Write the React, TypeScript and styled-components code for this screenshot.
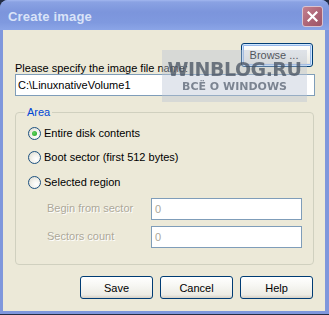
import React from 'react';
import styled, { createGlobalStyle } from 'styled-components';

const Global = createGlobalStyle`
  html, body { margin: 0; padding: 0; background: #232d45; }
  body {
    width: 329px; height: 315px; overflow: hidden;
    font-family: "Liberation Sans", Arial, sans-serif;
    font-size: 11px; color: #000;
  }
`;

const Window = styled.div`
  position: relative;
  width: 329px;
  height: 314px;
  box-sizing: border-box;
  display: flex;
  flex-direction: column;
  border-radius: 8px 8px 0 0;
  overflow: hidden;
  background: #7f97dc;
`;

const TitleBar = styled.div`
  height: 30px;
  flex: none;
  display: flex;
  align-items: center;
  justify-content: space-between;
  padding: 0 6px 0 8px;
  box-sizing: border-box;
  background: linear-gradient(#a2b7ef 0px, #8aa2e3 2px, #7c95dc 40%, #7f99df 75%, #8ba5e7 100%);
`;

const Title = styled.span`
  font-family: "Liberation Sans", Arial, sans-serif;
  font-weight: bold;
  font-size: 13px;
  color: #d9e3f8;
  letter-spacing: 0.2px;
  margin-top: 2px;
`;

const CloseButton = styled.div`
  width: 21px;
  height: 21px;
  box-sizing: border-box;
  border: 1px solid #d9c3d0;
  border-radius: 3px;
  background: linear-gradient(135deg, #c4808f, #aa6274 60%, #9d5567);
  display: flex;
  align-items: center;
  justify-content: center;
  margin-top: 2px;
`;

const Frame = styled.div`
  flex: 1;
  display: flex;
  padding: 0 4px 3px 3px;
`;

const Content = styled.div`
  position: relative;
  flex: 1;
  background: #ece9d8;
  display: flex;
  flex-direction: column;
  padding: 13px 10px 12px 12px;
`;

const TopRow = styled.div`
  display: flex;
  align-items: flex-end;
  justify-content: space-between;
`;

const Label = styled.span<{ $disabled?: boolean }>`
  line-height: 13px;
  color: ${p => (p.$disabled ? '#aca899' : '#000')};
  ${p => (p.$disabled ? 'text-shadow: 1px 1px 0 #fff;' : '')}
`;

const FileLabel = styled(Label)`
  margin-bottom: -4px;
`;

const Button = styled.button<{ $default?: boolean }>`
  font-family: "Liberation Sans", Arial, sans-serif;
  font-size: 11px;
  color: #000;
  width: 73px;
  height: 23px;
  box-sizing: border-box;
  border: 1px solid #003c74;
  border-radius: 3px;
  background: linear-gradient(#ffffff 0%, #f7f7f3 40%, #ecebe4 85%, #d6d0c5 100%);
  box-shadow: ${p => (p.$default ? 'inset 0 0 0 1px #cee7ff, inset 0 0 0 2px #98b8ea' : 'none')};
  padding: 0;
`;

const BrowseButton = styled(Button)`
  width: 72px;
  height: 24px;
  margin: 0 2px 4px 0;
  padding-right: 6px;
`;

const TextInput = styled.div<{ $disabled?: boolean }>`
  height: 22px;
  box-sizing: border-box;
  border: 1px solid #7f9db9;
  background: #fff;
  display: flex;
  align-items: center;
  padding-left: ${p => (p.$disabled ? '3px' : '2px')};
  color: ${p => (p.$disabled ? '#aca899' : '#000')};
`;

const PathInput = styled(TextInput)`
  margin-top: 3px;
`;

const GroupBox = styled.fieldset`
  margin: 10px 1px 0 0;
  padding: 2px 10px 16px 12px;
  border: 1px solid #d0d0bf;
  border-radius: 4px;
  display: flex;
  flex-direction: column;
`;

const Legend = styled.legend`
  color: #0046d5;
  padding: 0 2px;
  margin-left: -3px;
  line-height: 13px;
`;

const RadioRow = styled.div`
  height: 24.5px;
  display: flex;
  align-items: center;
  gap: 3px;
`;

const RadioCircle = styled.span<{ $checked?: boolean }>`
  width: 13px;
  height: 13px;
  box-sizing: border-box;
  border-radius: 50%;
  border: 1px solid #1c5180;
  background: radial-gradient(circle at 65% 65%, #ffffff 0%, #f4f3ee 40%, #d8d7cc 100%);
  display: flex;
  align-items: center;
  justify-content: center;
  &::after {
    content: '';
    display: ${p => (p.$checked ? 'block' : 'none')};
    width: 5px;
    height: 5px;
    border-radius: 50%;
    background: radial-gradient(circle at 40% 40%, #5fd35f, #21a121);
  }
`;

const FieldGrid = styled.div`
  display: grid;
  grid-template-columns: 104px 151px;
  row-gap: 6px;
  align-items: center;
  padding-left: 19px;
  margin-top: 3px;
`;

const ButtonRow = styled.div`
  margin-top: auto;
  display: flex;
  justify-content: flex-end;
  gap: 7px;
  padding-right: 2px;
`;

const Watermark = styled.div`
  position: absolute;
  left: 159px;
  top: 20px;
  width: 145px;
  height: 52px;
  background: rgba(185, 195, 212, 0.42);
  display: flex;
  flex-direction: column;
  align-items: center;
  justify-content: center;
  gap: 1px;
  pointer-events: none;
`;

const WmTitle = styled.span`
  font-family: "DejaVu Sans", Verdana, sans-serif;
  font-weight: bold;
  font-size: 19px;
  line-height: 20px;
  color: rgba(70, 80, 95, 0.75);
  filter: blur(0.6px);
  letter-spacing: -0.5px;
`;

const WmSub = styled.span`
  font-family: "DejaVu Sans", Verdana, sans-serif;
  font-weight: bold;
  font-size: 11px;
  line-height: 13px;
  color: rgba(80, 90, 105, 0.7);
  filter: blur(0.5px);
`;

export default function App() {
  return (
    <>
      <Global />
      <Window>
        <TitleBar>
          <Title>Create image</Title>
          <CloseButton>
            <svg width="11" height="11" viewBox="0 0 11 11">
              <path d="M1.5 1.5 L9.5 9.5 M9.5 1.5 L1.5 9.5" stroke="#fff" strokeWidth="2.2" strokeLinecap="square" />
            </svg>
          </CloseButton>
        </TitleBar>
        <Frame>
          <Content>
            <TopRow>
              <FileLabel>Please specify the image file name:</FileLabel>
              <BrowseButton $default>Browse ...</BrowseButton>
            </TopRow>
            <PathInput>C:\LinuxnativeVolume1</PathInput>
            <GroupBox>
              <Legend>Area</Legend>
              <RadioRow>
                <RadioCircle $checked />
                <Label>Entire disk contents</Label>
              </RadioRow>
              <RadioRow>
                <RadioCircle />
                <Label>Boot sector (first 512 bytes)</Label>
              </RadioRow>
              <RadioRow>
                <RadioCircle />
                <Label>Selected region</Label>
              </RadioRow>
              <FieldGrid>
                <Label $disabled>Begin from sector</Label>
                <TextInput $disabled>0</TextInput>
                <Label $disabled>Sectors count</Label>
                <TextInput $disabled>0</TextInput>
              </FieldGrid>
            </GroupBox>
            <ButtonRow>
              <Button>Save</Button>
              <Button>Cancel</Button>
              <Button>Help</Button>
            </ButtonRow>
            <Watermark>
              <WmTitle>WINBLOG.RU</WmTitle>
              <WmSub>ВСЁ О WINDOWS</WmSub>
            </Watermark>
          </Content>
        </Frame>
      </Window>
    </>
  );
}
